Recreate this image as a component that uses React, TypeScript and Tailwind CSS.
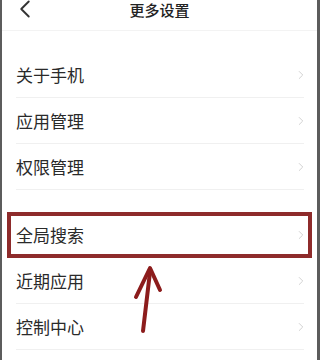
import { ChevronLeft, ChevronRight } from "lucide-react";

const groupOne = ["关于手机", "应用管理", "权限管理"];
const groupTwo = ["全局搜索", "近期应用", "控制中心"];

const Row = ({ label }: { label: string }) => (
  <div className="ml-[14px] mr-[13px] flex h-[46px] items-center justify-between border-b border-[#f0f0f0]">
    <span className="text-[17px] leading-none text-[#2a2a2a]">{label}</span>
    <ChevronRight className="-mr-[4px] h-[14px] w-[14px] text-[#cfcfcf]" strokeWidth={1.6} />
  </div>
);

export default function App() {
  return (
    <div
      className="relative h-[360px] w-[320px] overflow-hidden border-l-2 border-r-[3px] border-[#5c5c5c] bg-white"
      style={{ fontFamily: '"Noto Sans CJK SC", "Noto Sans", sans-serif' }}
    >
      <header className="relative flex h-[31px] items-start border-b border-[#f3f3f3]">
        <ChevronLeft className="ml-[8px] -mt-[6px] h-[30px] w-[30px] text-[#333]" strokeWidth={1.5} />
        <span className="absolute left-0 right-0 top-[2px] text-center text-[15px] font-medium leading-[15px] text-[#222]">
          更多设置
        </span>
      </header>

      <div className="h-[21px]" />
      {groupOne.map((label) => (
        <Row key={label} label={label} />
      ))}

      <div className="h-[22px]" />
      <div className="relative">
        {groupTwo.map((label) => (
          <Row key={label} label={label} />
        ))}
        <div className="absolute left-[5px] top-0 h-[46px] w-[305px] border-4 border-[#8e2b2b]" />
      </div>

      <svg className="absolute left-0 top-0" width="320" height="360" viewBox="0 0 320 360">
        <path d="M141 331 L148 272" stroke="#8c1c1c" strokeWidth="4" strokeLinecap="round" fill="none" />
        <path d="M134 297 L148 268 L158 290" stroke="#8c1c1c" strokeWidth="4" strokeLinecap="round" strokeLinejoin="round" fill="none" />
      </svg>
    </div>
  );
}
